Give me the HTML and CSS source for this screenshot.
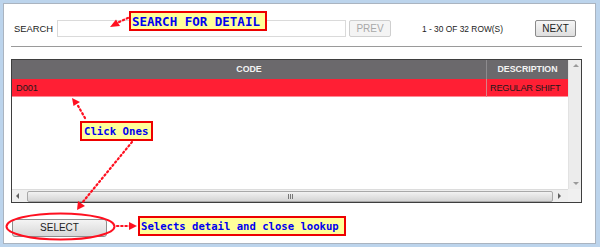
FILE: index.html
```html
<!DOCTYPE html>
<html>
<head>
<meta charset="utf-8">
<link rel="stylesheet" href="styles.css">
</head>
<body>
<div class="frame">
  <div class="panel">
    <div class="toolbar">
      <span class="label">SEARCH</span>
      <input class="search" type="text">
      <button class="btn btn-disabled prev">PREV</button>
      <span class="count">1 - 30 OF 32 ROW(S)</span>
      <button class="btn next">NEXT</button>
    </div>
    <div class="sep"></div>
    <div class="grid">
      <div class="body">
        <div class="row head">
          <div class="c-code">CODE</div>
          <div class="c-desc">DESCRIPTION</div>
        </div>
        <div class="row sel">
          <div class="c-code">D001</div>
          <div class="c-desc">REGULAR SHIFT</div>
        </div>
      </div>
      <div class="vscroll">
        <span class="arr-up"></span>
        <span class="arr-down"></span>
      </div>
      <div class="hscroll">
        <span class="arr-left"></span>
        <div class="thumb"><span class="grip"></span></div>
        <span class="arr-right"></span>
      </div>
      <div class="corner"></div>
    </div>
    <div class="footer">
      <button class="btn select">SELECT</button>
    </div>
  </div>
</div>

<div class="note note-search">SEARCH FOR DETAIL</div>
<div class="note note-click">Click Ones</div>
<div class="note note-select">Selects detail and close lookup</div>

<svg class="overlay" width="600" height="247" viewBox="0 0 600 247">
  <g stroke="#ff1020" stroke-width="2.2" stroke-dasharray="1.4 2.8" stroke-linecap="round" fill="none">
    <line x1="128" y1="18" x2="117" y2="23"/>
    <line x1="85" y1="118" x2="77" y2="104"/>
    <line x1="132" y1="142" x2="82" y2="203"/>
    <line x1="117" y1="226" x2="130" y2="226"/>
  </g>
  <g fill="#ff1020">
    <polygon points="110,27 116,19.5 120,26"/>
    <polygon points="72,98 73.5,106 80,102"/>
    <polygon points="77,210 78,201 85,206"/>
    <polygon points="137,226 129,222 129,230"/>
  </g>
  <ellipse cx="60.5" cy="226.5" rx="54" ry="13" fill="none" stroke="#ff1020" stroke-width="2"/>
</svg>
</body>
</html>
```
FILE: styles.css
```css
html, body {
  margin: 0;
  padding: 0;
}
body {
  width: 600px;
  height: 247px;
  background: #bcd4ec;
  font-family: "Liberation Sans", Arial, sans-serif;
  position: relative;
  overflow: hidden;
}
.frame {
  padding: 3px;
}
.panel {
  width: 591px;
  height: 239px;
  background: #fff;
  border: 1px solid #aab4c0;
}
.toolbar {
  display: flex;
  align-items: center;
  height: 17px;
  margin-top: 16px;
  padding-left: 10px;
}
.label {
  width: 43px;
  font-size: 9.4px;
  color: #222;
}
.search {
  box-sizing: border-box;
  width: 289px;
  height: 17px;
  margin: 0;
  padding: 0;
  border: 1px solid #dadada;
  background: #fff;
}
.btn {
  box-sizing: border-box;
  margin: 0;
  padding: 0;
  font-family: "Liberation Sans", Arial, sans-serif;
  font-size: 10px;
  color: #222;
  border: 1px solid #8a8a8a;
  border-radius: 2px;
  background: linear-gradient(#f6f6f6, #dedede);
  height: 17px;
}
.btn-disabled {
  color: #a8a8a8;
  border-color: #cfcfcf;
  background: #f4f4f4;
}
.prev {
  width: 42px;
  margin-left: 3px;
}
.count {
  width: 144px;
  box-sizing: border-box;
  padding-left: 31px;
  font-size: 8.4px;
  color: #222;
  white-space: nowrap;
}
.next {
  width: 41px;
}
.sep {
  height: 1px;
  background: #9a9a9a;
  margin: 9px 0 0 7px;
  width: 571px;
}
.grid {
  margin: 12px 0 0 7px;
  width: 569px;
  border: 1px solid #3e3e3e;
  display: grid;
  grid-template-columns: 556px 13px;
  grid-template-rows: 129px 13px;
}
.body {
  background: #fff;
}
.row {
  display: grid;
  grid-template-columns: 474px 82px;
}
.head {
  height: 19px;
  background: #6b696c;
  color: #f4f4f4;
  font-weight: bold;
  font-size: 8.8px;
  line-height: 19px;
  text-align: center;
}
.head .c-desc {
  border-left: 1px solid #8d8b8e;
}
.sel {
  height: 17px;
  background: #ff1f34;
  border-bottom: 1px solid #ff8a94;
  font-size: 9.2px;
  line-height: 18px;
  color: #1a1a1a;
}
.sel .c-code {
  padding-left: 4px;
}
.sel .c-desc {
  border-left: 1px solid #d98088;
  padding-left: 3px;
  white-space: nowrap;
  letter-spacing: -0.25px;
  overflow: hidden;
}
.vscroll {
  background: #ececec;
  border-left: 1px solid #e2e2e2;
  position: relative;
}
.arr-up, .arr-down {
  position: absolute;
  left: 4px;
  width: 0;
  height: 0;
  border-left: 3px solid transparent;
  border-right: 3px solid transparent;
}
.arr-up {
  top: 4px;
  border-bottom: 3px solid #9a9a9a;
}
.arr-down {
  bottom: 4px;
  border-top: 3px solid #9a9a9a;
}
.hscroll {
  background: #eeeeee;
  border-top: 1px solid #dcdcdc;
  display: flex;
  align-items: center;
  position: relative;
}
.arr-left, .arr-right {
  width: 0;
  height: 0;
  border-top: 3px solid transparent;
  border-bottom: 3px solid transparent;
}
.arr-left {
  margin-left: 4px;
  border-right: 3px solid #606060;
}
.arr-right {
  margin-left: 5px;
  border-left: 3px solid #606060;
}
.thumb {
  box-sizing: border-box;
  margin-left: 8px;
  width: 526px;
  height: 11px;
  border: 1px solid #a8a8a8;
  border-radius: 2px;
  background: linear-gradient(#f2f2f2, #d4d4d4);
  display: flex;
  justify-content: center;
  align-items: center;
}
.grip {
  width: 5px;
  height: 5px;
  background: repeating-linear-gradient(90deg, #777 0 1px, transparent 1px 2px);
}
.corner {
  background: #f0f0f0;
}
.footer {
  margin: 14px 0 0 8px;
}
.select {
  width: 95px;
  height: 18px;
  font-size: 10px;
  border-color: #8e8e8e;
  border-radius: 3px;
  background: linear-gradient(#f4f4f4, #d8d8d8);
}
.note {
  position: absolute;
  box-sizing: border-box;
  background: #ffff99;
  border: 2px solid #ee0000;
  color: #0000f0;
  font-family: "DejaVu Sans Mono", monospace;
  font-weight: bold;
  white-space: nowrap;
  display: flex;
  align-items: center;
}
.note-search {
  left: 129px;
  top: 11px;
  width: 138px;
  height: 20px;
  font-size: 12.5px;
  padding-left: 1px;
}
.note-click {
  left: 80px;
  top: 121px;
  width: 73px;
  height: 20px;
  font-size: 10.7px;
  padding-left: 2px;
}
.note-select {
  left: 138px;
  top: 216px;
  width: 208px;
  height: 20px;
  font-size: 10.6px;
  padding-left: 1px;
}
.overlay {
  position: absolute;
  left: 0;
  top: 0;
  pointer-events: none;
}
```
